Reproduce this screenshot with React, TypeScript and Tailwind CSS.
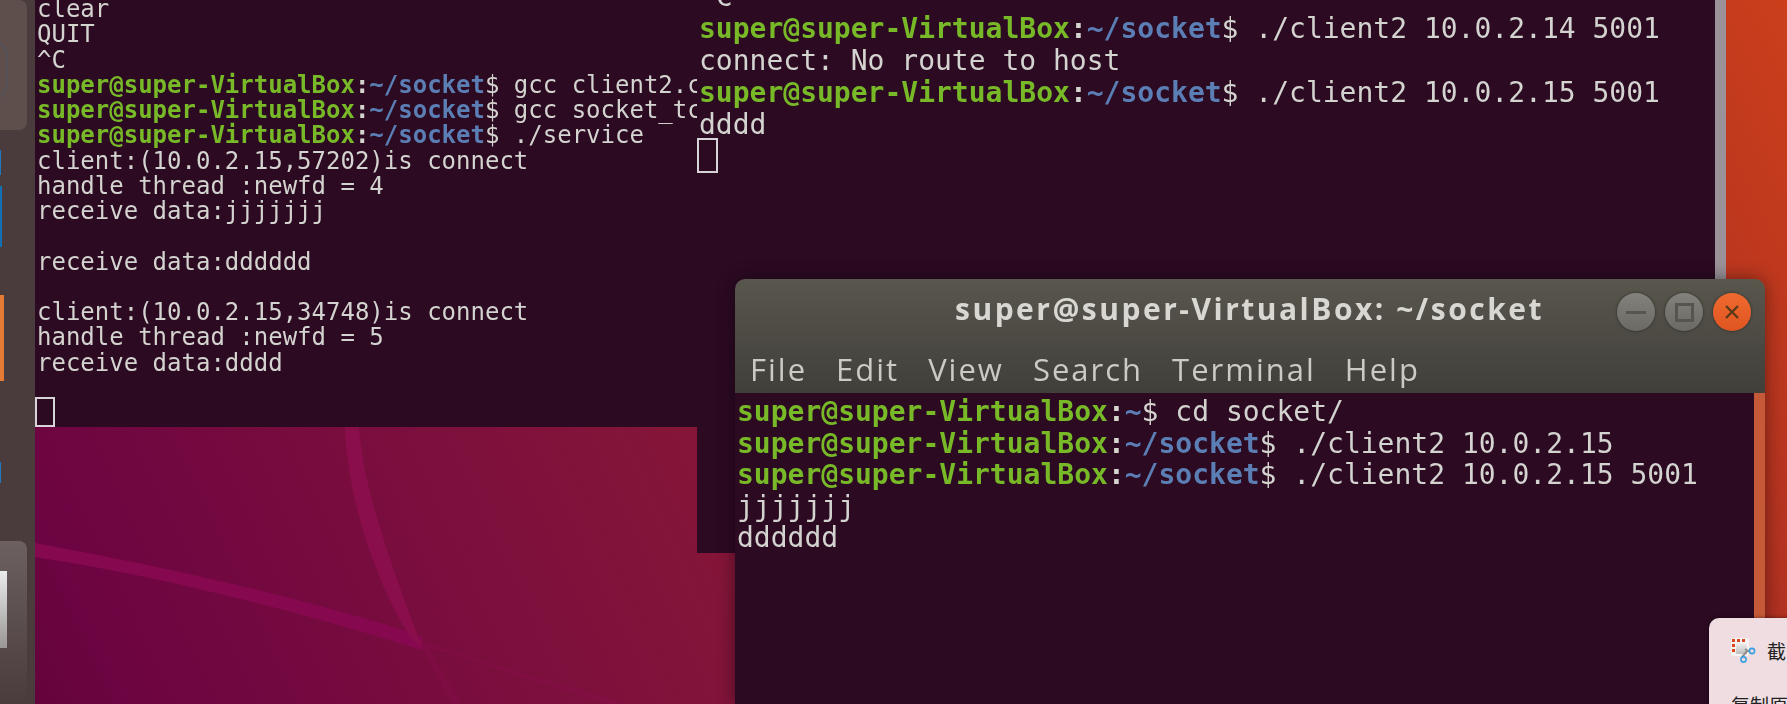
function Prompt({ path, cmd }: { path: string; cmd: string }) {
  return (
    <div>
      <span className="font-bold text-[#78b928]">super@super-VirtualBox</span>
      <span className="font-bold text-[#d5d5d0]">:</span>
      <span className="font-bold text-[#5b7fb5]">{path}</span>
      <span>$ {cmd}</span>
    </div>
  );
}

function Cursor({ className }: { className: string }) {
  return <div className={`border-2 border-[#d8d3d8] ${className}`} />;
}

function Wallpaper() {
  return (
    <svg className="absolute inset-0 h-full w-full" viewBox="0 0 1752 704">
      <path d="M0 557 C120 575 260 610 387 650 L387 636 C260 595 120 565 0 543 Z" fill="#86094f" />
      <path d="M310 427 C312 490 335 570 372 632 L388 650 C360 575 328 490 324 427 Z" fill="#8a0e4c" />
      <path d="M385 640 C450 665 520 680 590 704 L570 704 C500 680 450 665 385 645 Z" fill="#8a0d4e" opacity="0.35" />
      <path d="M385 645 L418 704 L426 704 L392 645 Z" fill="#8a0d4e" opacity="0.3" />
    </svg>
  );
}

function WindowButtons() {
  return (
    <div className="flex items-center gap-[10px]">
      <div className="flex h-[38px] w-[38px] items-center justify-center rounded-full bg-gradient-to-b from-[#83817b] to-[#6b6a64] shadow-[0_0_3px_rgba(0,0,0,0.5)]">
        <div className="h-[3px] w-[20px] bg-[#565550]" />
      </div>
      <div className="flex h-[38px] w-[38px] items-center justify-center rounded-full bg-gradient-to-b from-[#83817b] to-[#6b6a64] shadow-[0_0_3px_rgba(0,0,0,0.5)]">
        <div className="h-[19px] w-[19px] border-[3px] border-[#565550]" />
      </div>
      <div className="flex h-[38px] w-[38px] items-center justify-center rounded-full bg-gradient-to-b from-[#ee6a30] to-[#e05420] shadow-[0_0_3px_rgba(0,0,0,0.5)]">
        <svg width="16" height="16" viewBox="0 0 16 16" stroke="#5a3a18" strokeWidth="2.4">
          <path d="M2 2 L14 14 M14 2 L2 14" />
        </svg>
      </div>
    </div>
  );
}

function SnipIcon() {
  return (
    <svg width="26" height="26" viewBox="0 0 26 26" className="shrink-0">
      <defs>
        <linearGradient id="snip" x1="0" y1="0" x2="0" y2="1">
          <stop offset="0" stopColor="#f0f0f0" />
          <stop offset="1" stopColor="#bdbdbd" />
        </linearGradient>
      </defs>
      <rect x="0" y="0" width="18" height="18" rx="2" fill="#f6f2f2" />
      <rect x="5" y="5" width="11" height="11" rx="1" fill="url(#snip)" />
      <g fill="#d8481c">
        <rect x="1" y="1" width="3" height="3" />
        <rect x="6" y="1" width="3" height="3" />
        <rect x="11" y="1" width="3" height="3" />
        <rect x="1" y="6" width="3" height="3" />
        <rect x="1" y="11" width="3" height="3" />
      </g>
      <path d="M11 19 L17 12 M14 11 L19 14" stroke="#8f8f8f" strokeWidth="2" />
      <circle cx="21" cy="13" r="2.6" fill="none" stroke="#3da0e0" strokeWidth="1.6" />
      <circle cx="12.5" cy="21.5" r="2.6" fill="none" stroke="#3da0e0" strokeWidth="1.6" />
    </svg>
  );
}

const menu = ['File', 'Edit', 'View', 'Search', 'Terminal', 'Help'];

export default function App() {
  return (
    <div className="flex h-[704px] w-[1787px] overflow-hidden bg-[#4a3c3c]">
      {/* Launcher */}
      <div className="flex h-full w-[35px] shrink-0 flex-col items-start overflow-hidden blur-[0.6px]">
        <div className="relative h-[130px] w-[27px] overflow-hidden rounded-r-lg bg-[#5e4f4d]">
          <div className="absolute left-[-24px] top-[40px] h-[60px] w-[32px] rounded-full border-2 border-[#55525a]" />
        </div>
        <div className="mt-[20px] h-[25px] w-[1px] bg-[#1d78c0]" />
        <div className="mt-[11px] h-[61px] w-[2px] bg-[#1470b5]" />
        <div className="mt-[48px] h-[86px] w-[4px] bg-[#e47a34]" />
        <div className="mt-[81px] h-[21px] w-[1px] bg-[#1d78c0]" />
        <div className="mt-[58px] h-[163px] w-[27px] rounded-tr-lg bg-gradient-to-b from-[#6c6060] to-[#4a3c3c] pt-[30px]">
          <div className="h-[77px] w-[7px] bg-gradient-to-b from-[#ececec] to-[#9a9696]" />
        </div>
      </div>

      {/* Desktop */}
      <div className="relative h-full flex-1 bg-[linear-gradient(65deg,#65033d_0%,#6e0542_6%,#841539_36%,#a82c24_80%,#cb3f1b_100%)]">
        <Wallpaper />

        {/* Server terminal */}
        <div className="absolute left-0 top-0 h-[427px] w-[662px] overflow-hidden whitespace-pre bg-[#2c0a22]">
          <div className="mt-[-3px] pl-[2px] font-['DejaVu_Sans_Mono',monospace] text-[24px] leading-[25.27px] text-[#d3d3cf] blur-[0.6px]">
            <div>clear</div>
            <div>QUIT</div>
            <div>^C</div>
            <Prompt path="~/socket" cmd="gcc client2.c" />
            <Prompt path="~/socket" cmd="gcc socket_tcp.c" />
            <Prompt path="~/socket" cmd="./service" />
            <div>client:(10.0.2.15,57202)is connect</div>
            <div>handle thread :newfd = 4</div>
            <div>receive data:jjjjjjj</div>
            <div>&nbsp;</div>
            <div>receive data:dddddd</div>
            <div>&nbsp;</div>
            <div>client:(10.0.2.15,34748)is connect</div>
            <div>handle thread :newfd = 5</div>
            <div>receive data:dddd</div>
          </div>
          <Cursor className="absolute bottom-0 left-0 h-[30px] w-[20px]" />
        </div>

        {/* Client terminal */}
        <div className="absolute left-[662px] top-0 flex h-[553px] w-[1029px] overflow-hidden">
          <div className="relative flex-1 overflow-hidden whitespace-pre bg-[#2c0a22]">
            <div className="mt-[-19px] pl-[2px] font-['DejaVu_Sans_Mono',monospace] text-[28px] leading-[32px] text-[#d3d3cf] blur-[0.6px]">
              <div>^C</div>
              <Prompt path="~/socket" cmd="./client2 10.0.2.14 5001" />
              <div>connect: No route to host</div>
              <Prompt path="~/socket" cmd="./client2 10.0.2.15 5001" />
              <div>dddd</div>
            </div>
            <Cursor className="mt-[-3px] h-[35px] w-[21px]" />
          </div>
          <div className="w-[11px] bg-[#9a9298]" />
        </div>

        {/* Front terminal */}
        <div className="absolute left-[700px] top-[279px] flex h-[425px] w-[1030px] flex-col overflow-hidden rounded-t-[10px] shadow-[0_0_18px_rgba(0,0,0,0.45)]">
          <div className="h-[114px] shrink-0 bg-gradient-to-b from-[#59564d] to-[#403f3a]">
            <div className="relative flex h-[66px] items-center justify-end pr-[14px]">
              <div className="absolute left-[220px] top-[7px] font-['Open_Sans',sans-serif] text-[30px] font-bold tracking-[2.5px] text-[#d9d7d1] blur-[0.5px]">
                super@super-VirtualBox: ~/socket
              </div>
              <WindowButtons />
            </div>
            <div className="flex gap-[29px] pl-[15px] font-['Open_Sans',sans-serif] text-[31px] leading-[48px] tracking-[2px] text-[#cbcac4] blur-[0.5px]">
              {menu.map((m) => (
                <span key={m}>{m}</span>
              ))}
            </div>
          </div>
          <div className="flex flex-1 overflow-hidden">
            <div className="flex-1 whitespace-pre bg-[#2c0a22] pl-[2px] pt-[3px] font-['DejaVu_Sans_Mono',monospace] text-[28px] leading-[31.6px] text-[#d3d3cf] blur-[0.6px]">
              <Prompt path="~" cmd="cd socket/" />
              <Prompt path="~/socket" cmd="./client2 10.0.2.15" />
              <Prompt path="~/socket" cmd="./client2 10.0.2.15 5001" />
              <div>jjjjjjj</div>
              <div>dddddd</div>
            </div>
            <div className="w-[11px] bg-[#c65a38]" />
          </div>
        </div>

        {/* Snip popup */}
        <div className="absolute left-[1674px] top-[618px] h-[110px] w-[200px] rounded-tl-[10px] bg-[#efdde2] pl-[22px] pt-[20px] font-['Noto_Sans_CJK_SC',sans-serif] text-[19px] text-[#222] shadow-[0_0_4px_rgba(0,0,0,0.5)]">
          <div className="flex h-[26px] items-center gap-[10px]">
            <SnipIcon />
            <span className="whitespace-nowrap">截图</span>
          </div>
          <div className="mt-[29px] whitespace-nowrap leading-[24px]">复制原</div>
        </div>
      </div>
    </div>
  );
}
